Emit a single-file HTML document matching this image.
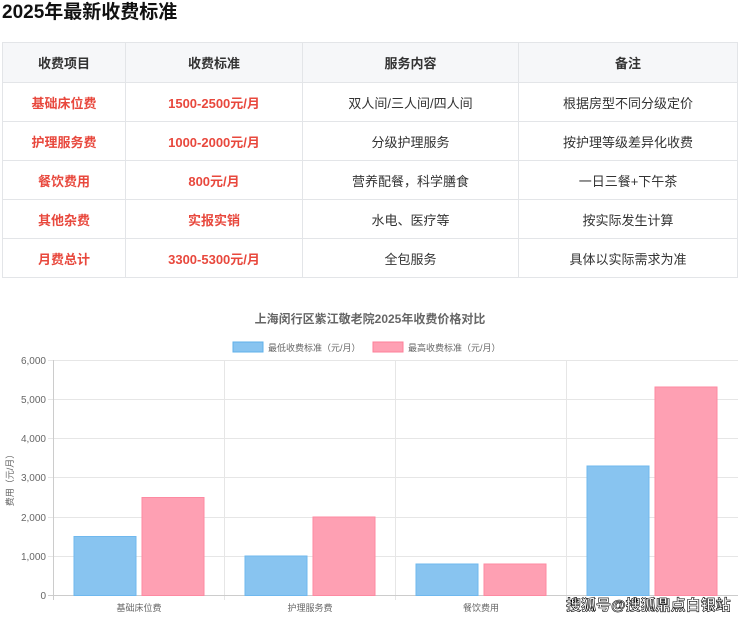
<!DOCTYPE html>
<html><head><meta charset="utf-8"><style>
body{margin:0;width:740px;height:623px;background:#fff;font-family:"Liberation Sans","Noto Sans CJK SC",sans-serif;overflow:hidden;position:relative}
h1{position:absolute;left:2px;top:0;margin:0;font-size:19px;font-weight:bold;color:#111;line-height:26px}
table{position:absolute;left:2px;top:42px;border-collapse:collapse;width:736px;font-size:13px}
td,th{border:1px solid #e3e5e8;text-align:center;height:38px;padding:0;color:#333;font-weight:normal}
th{background:#f6f7f9;font-weight:bold;color:#333;height:39px}
td.r{color:#e8483d;font-weight:bold}
.wm{position:absolute;left:566px;top:597px;font-size:15px;font-weight:bold;color:#fff;-webkit-text-stroke:0.6px #000;white-space:nowrap;line-height:18px}
</style></head><body>
<h1>2025年最新收费标准</h1>
<table>
<tr><th style="width:122px">收费项目</th><th style="width:176px">收费标准</th><th style="width:215px">服务内容</th><th>备注</th></tr>
<tr><td class="r">基础床位费</td><td class="r">1500-2500元/月</td><td>双人间/三人间/四人间</td><td>根据房型不同分级定价</td></tr>
<tr><td class="r">护理服务费</td><td class="r">1000-2000元/月</td><td>分级护理服务</td><td>按护理等级差异化收费</td></tr>
<tr><td class="r">餐饮费用</td><td class="r">800元/月</td><td>营养配餐，科学膳食</td><td>一日三餐+下午茶</td></tr>
<tr><td class="r">其他杂费</td><td class="r">实报实销</td><td>水电、医疗等</td><td>按实际发生计算</td></tr>
<tr><td class="r">月费总计</td><td class="r">3300-5300元/月</td><td>全包服务</td><td>具体以实际需求为准</td></tr>
</table>
<svg style="position:absolute;left:0;top:0" width="740" height="623" font-family="Liberation Sans,Noto Sans CJK SC,sans-serif">
<text x="370" y="323" text-anchor="middle" font-size="12" font-weight="bold" fill="#666">上海闵行区紫江敬老院2025年收费价格对比</text>
<rect x="233" y="342" width="30" height="10" fill="#88c4f0" stroke="#5fb0ea"/>
<text x="268" y="351" font-size="9" fill="#666">最低收费标准（元/月）</text>
<rect x="373" y="342" width="30" height="10" fill="#fea0b3" stroke="#fd7f98"/>
<text x="408" y="351" font-size="9" fill="#666">最高收费标准（元/月）</text>
<g stroke="#e6e6e6" stroke-width="1">
<line x1="48" y1="360.5" x2="738" y2="360.5"/><line x1="48" y1="399.5" x2="738" y2="399.5"/><line x1="48" y1="438.5" x2="738" y2="438.5"/><line x1="48" y1="477.5" x2="738" y2="477.5"/><line x1="48" y1="517.5" x2="738" y2="517.5"/><line x1="48" y1="556.5" x2="738" y2="556.5"/>
<line x1="224.5" y1="360" x2="224.5" y2="600"/><line x1="395.5" y1="360" x2="395.5" y2="600"/><line x1="566.5" y1="360" x2="566.5" y2="600"/>
</g>
<line x1="53.5" y1="360" x2="53.5" y2="600" stroke="#ccc"/>
<line x1="48" y1="595.5" x2="738" y2="595.5" stroke="#ccc"/>
<g font-size="10" fill="#666" text-anchor="end">
<text x="46" y="364">6,000</text><text x="46" y="403">5,000</text><text x="46" y="442">4,000</text><text x="46" y="481">3,000</text><text x="46" y="521">2,000</text><text x="46" y="560">1,000</text><text x="46" y="599">0</text>
</g>
<text transform="translate(13,478) rotate(-90)" font-size="9" fill="#666" text-anchor="middle">费用（元/月）</text>
<g fill="#88c4f0" stroke="#6fb8ee">
<rect x="74" y="536.5" width="62" height="59"/><rect x="245" y="556" width="62" height="39.5"/><rect x="416" y="564" width="62" height="31.5"/><rect x="587" y="466" width="62" height="129.5"/>
</g>
<g fill="#fea0b3" stroke="#fd8aa2">
<rect x="142" y="497.5" width="62" height="98"/><rect x="313" y="517" width="62" height="78.5"/><rect x="484" y="564" width="62" height="31.5"/><rect x="655" y="387" width="62" height="208.5"/>
</g>
<g font-size="9" fill="#666" text-anchor="middle">
<text x="139" y="611">基础床位费</text><text x="310" y="611">护理服务费</text><text x="481" y="611">餐饮费用</text>
</g>
</svg>
<div class="wm">搜狐号@搜狐鼎点白银站</div>
</body></html>
